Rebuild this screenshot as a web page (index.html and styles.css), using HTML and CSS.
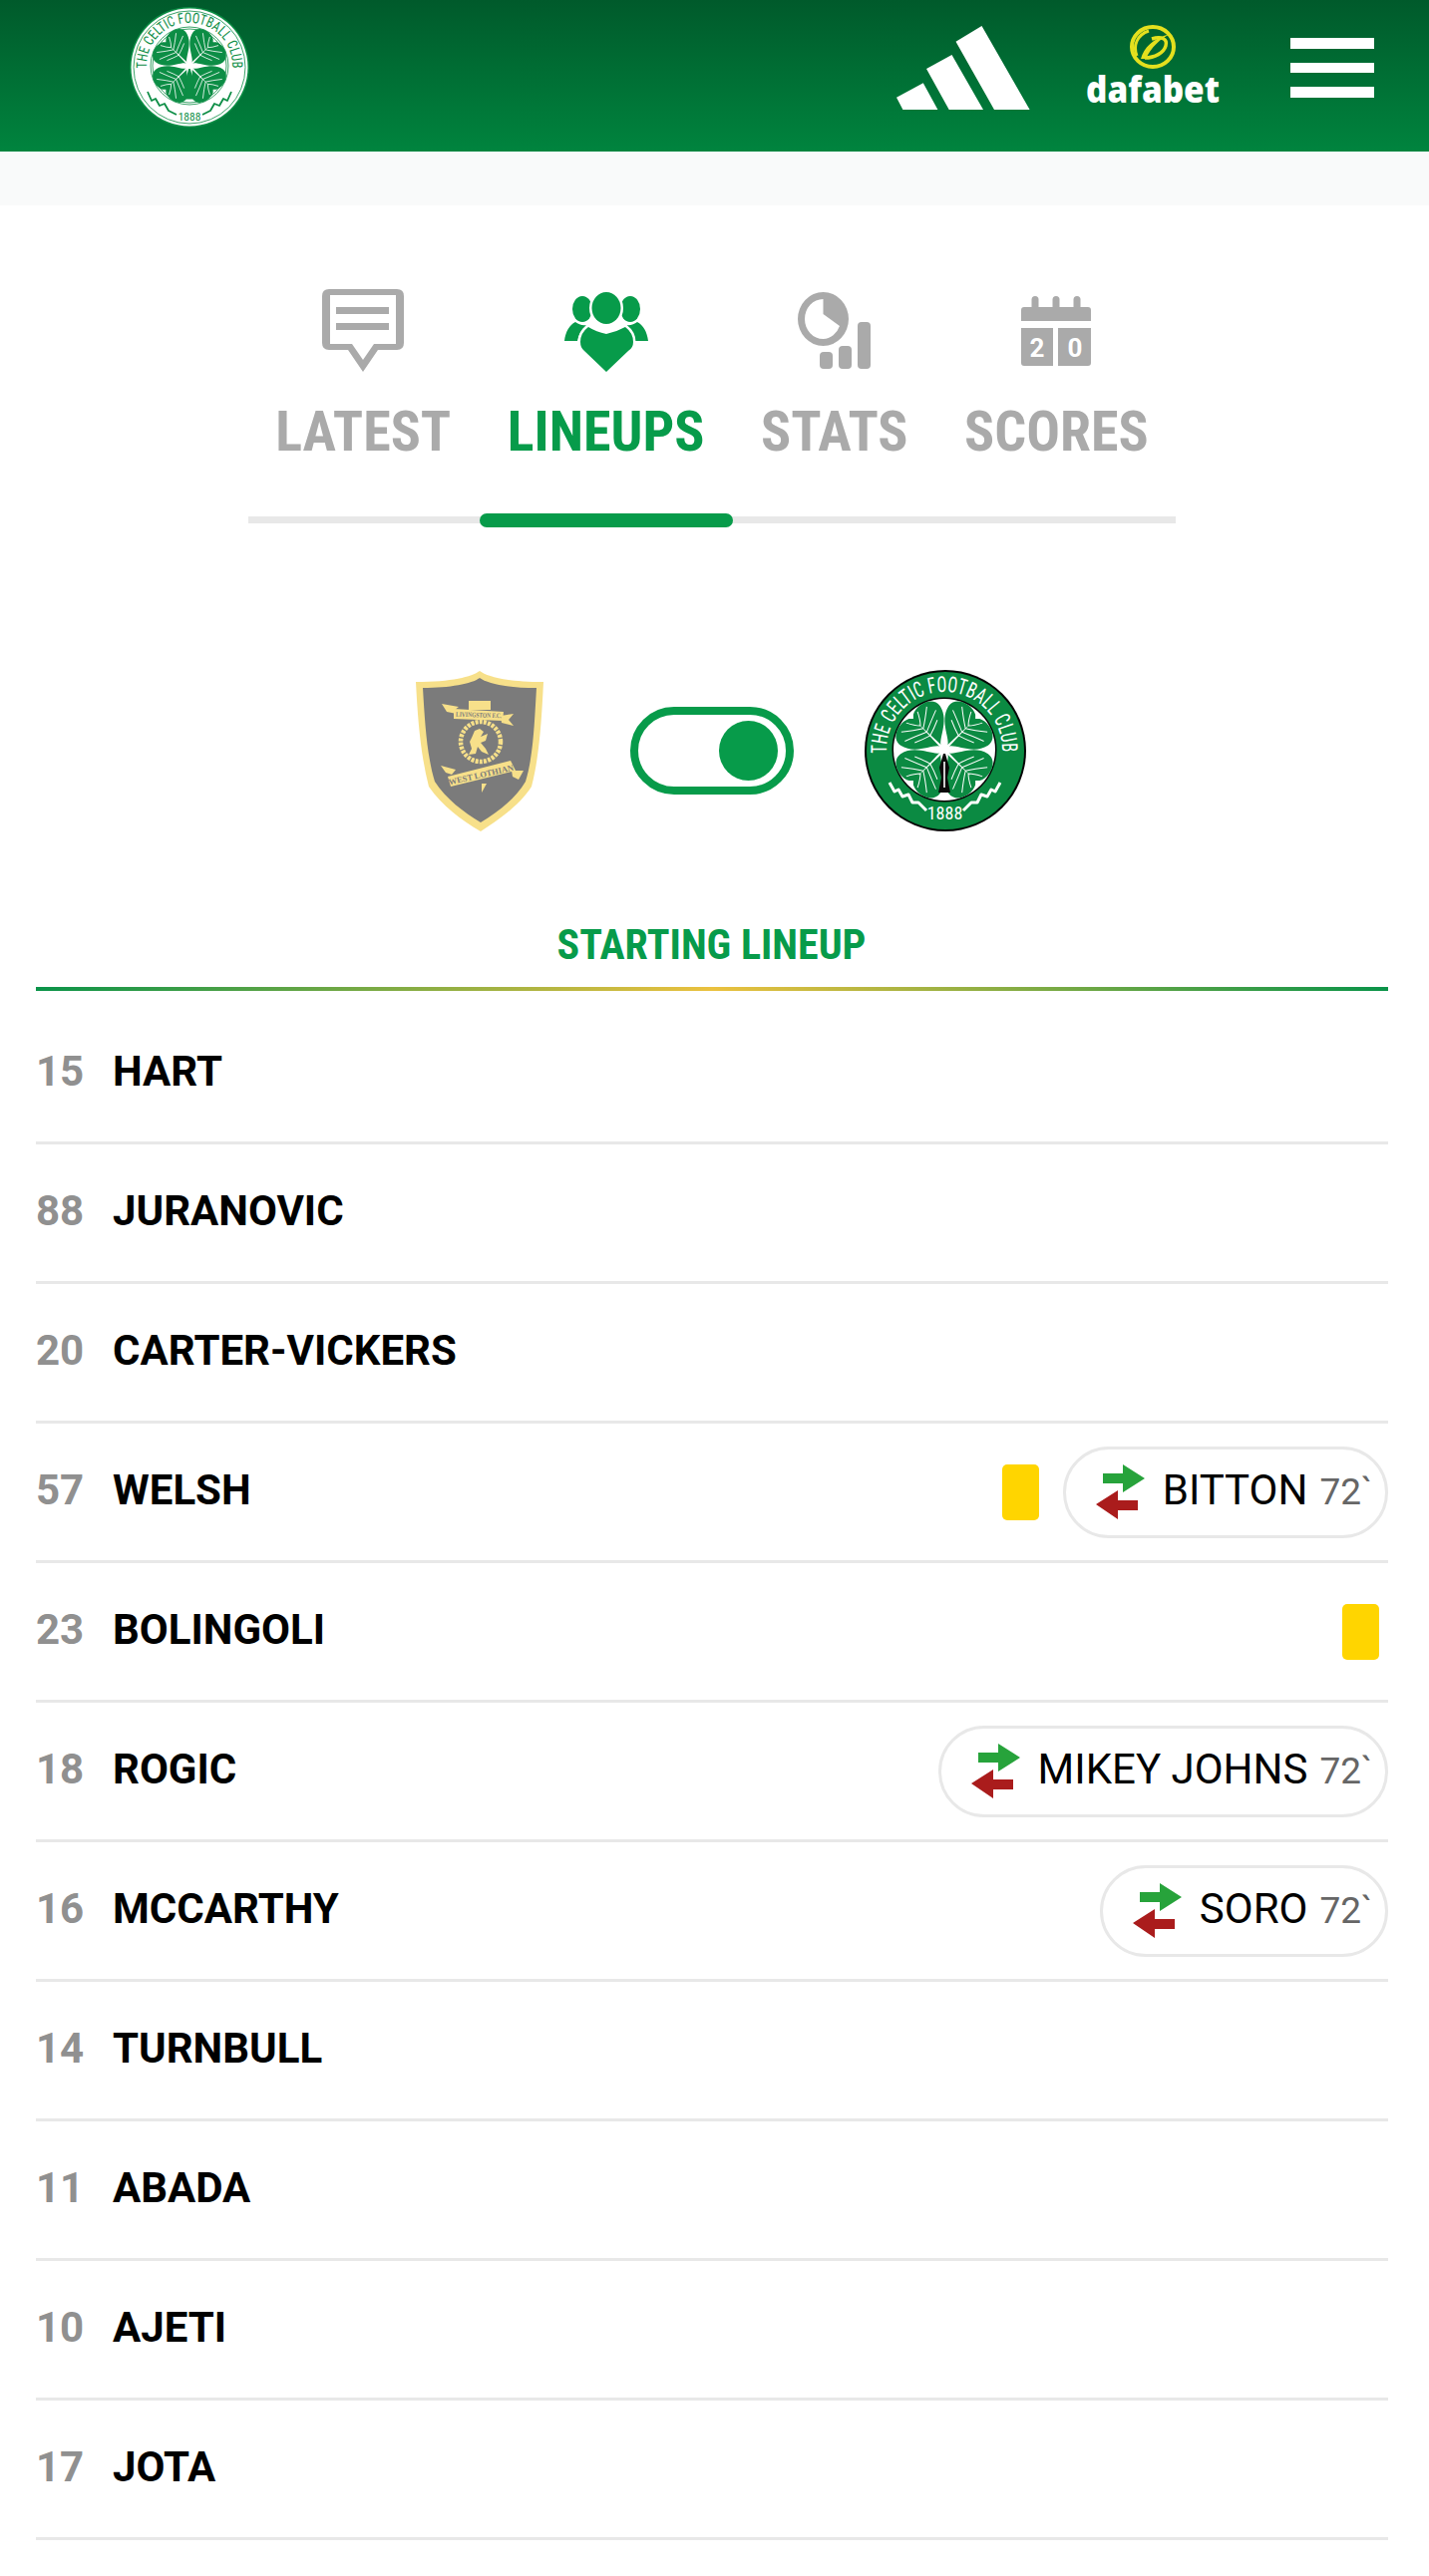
FILE: index.html
```html
<!DOCTYPE html>
<html lang="en">
<head>
<meta charset="utf-8">
<title>Lineups</title>
<link rel="stylesheet" href="styles.css">
</head>
<body>
<svg class="defs" aria-hidden="true">
  <defs>
    <symbol id="sub" viewBox="0 0 50 56">
      <path fill="#27a33b" d="M7 9H27V0L49 14 27 28V19H7Z"/>
      <path fill="#aa1c1c" d="M42 36H22V26L0 40 22 55V46H42Z"/>
    </symbol>
    <g id="leaf">
      <path d="M0-4C-2-12-24-16-28-34-30-47-12-52-3-47L0-44 3-47C12-52 30-47 28-34 24-16 2-12 0-4Z"/>
      <path class="midrib" d="M-1.300-3 0-38 1.300-3Z"/>
      <path class="veins" d="M0-20Q-7-22-16-26M0-25Q-9-29-22-34M0-30Q-8-35-18-43M0-34Q-4-38-8-46M0-20Q7-22 16-26M0-25Q9-29 22-34M0-30Q8-35 18-43M0-34Q4-38 8-46"/>
    </g>
    <g id="clover">
      <use href="#leaf" transform="rotate(45)"/>
      <use href="#leaf" transform="rotate(135)"/>
      <use href="#leaf" transform="rotate(225)"/>
      <use href="#leaf" transform="rotate(315)"/>
    </g>
  </defs>
</svg>

<header class="topbar">
  <svg class="crest-small" viewBox="0 0 120 121">
    <ellipse cx="60" cy="60.500" rx="60" ry="60.500" fill="#0c8d45"/>
    <ellipse cx="60" cy="60.500" rx="58.500" ry="59" fill="#fff"/>
    <ellipse cx="60" cy="60.500" rx="56" ry="56.500" class="crest-line"/>
    <circle cx="60" cy="59" r="39" class="crest-line"/>
    <circle cx="60" cy="59" r="37" class="crest-line"/>
    <path id="arc-small" fill="none" d="M17.600 66A43 43 0 1 1 102.400 66"/>
    <text class="crest-ring crest-ring-small"><textPath href="#arc-small" textLength="140" startOffset="4.500" lengthAdjust="spacingAndGlyphs">THE CELTIC FOOTBALL CLUB</textPath></text>
    <g class="clover-small" transform="translate(60 59) scale(.76)">
      <use href="#clover"/>
      <path d="M-1 4-5 18-3 28-6 44H6L3 28 5 18 1 4Z"/>
    </g>
    <path class="wave wave-small" d="M18 85 22 94 26 92 30 99 35 97 39 104 47 108M102 85 98 94 94 92 90 99 85 97 81 104 73 108"/>
    <text class="crest-year crest-year-small" x="60" y="114">1888</text>
  </svg>

  <svg class="adidas" viewBox="0 0 134 84" role="img" aria-label="adidas">
    <path fill="#fff" d="M0 71.700 26.800 57.300 41.400 84H6.400ZM30 43 55.500 29 87 84H52.700ZM59.500 15.700 85.500 0 133.600 84H98Z"/>
  </svg>

  <svg class="dafabet" viewBox="0 0 136 84">
    <ellipse cx="68" cy="21" rx="21" ry="20" fill="none" stroke="#e4e01e" stroke-width="4"/>
    <path class="dafabet-arc" d="M52 30C48 20 52 9 64 5"/>
    <path fill="#e4e01e" d="M56 33C59 22 68 12 86 8 76 12 66 22 61 33Z"/>
    <path class="dafabet-d" d="M67 13C77 10 83 13 81 20 79 27 70 32 60 32"/>
    <text class="dafabet-word" x="68" y="77" textLength="134" lengthAdjust="spacingAndGlyphs">dafabet</text>
  </svg>

  <div class="burger"><span></span><span></span><span></span></div>
</header>
<div class="subbar"></div>

<nav class="tabs">
  <a class="tab">
    <svg class="tab-icon tab-latest" viewBox="0 0 82 83">
      <path d="M7 0H75Q82 0 82 7V54Q82 61 75 61H56L41 83 26 61H7Q0 61 0 54V7Q0 0 7 0ZM8 6V55H30L41 71 52 55H74V6ZM14 18H67V25H14ZM14 34H67V41H14Z" fill-rule="evenodd"/>
    </svg>
    <span class="tab-label">LATEST</span>
  </a>
  <a class="tab tab-on">
    <svg class="tab-icon tab-lineups" viewBox="0 0 84 80">
      <ellipse cx="18" cy="17" rx="10" ry="13"/>
      <ellipse cx="66" cy="17" rx="10" ry="13"/>
      <path d="M11 30C14 32 18 34 22 33 17 38 14 43 13 49H0C1 40 5 33 11 30ZM73 30C70 32 66 34 62 33 67 38 70 43 71 49H84C83 40 79 33 73 30Z"/>
      <ellipse class="gap-stroke" cx="42" cy="16" rx="14.500" ry="16"/>
      <path class="gap-stroke" d="M24 35Q32 40 42 42 52 40 61 35 69 41 69 50 69 56 64 59L42 80 20 59Q16 56 16 50 16 41 24 35Z"/>
    </svg>
    <span class="tab-label">LINEUPS</span>
  </a>
  <a class="tab">
    <svg class="tab-icon tab-stats" viewBox="0 0 73 77">
      <path fill-rule="evenodd" d="M25.500 0A25.500 27 0 1 1 25.500 54 25.500 27 0 1 1 25.500 0ZM25.500 7A18.500 20 0 1 0 25.500 47 18.500 20 0 0 0 42 34L25.500 22Z"/>
      <rect x="22" y="60" width="13" height="17" rx="4"/>
      <rect x="41" y="54" width="13" height="23" rx="4"/>
      <rect x="60" y="30" width="13" height="47" rx="4"/>
    </svg>
    <span class="tab-label">STATS</span>
  </a>
  <a class="tab">
    <svg class="tab-icon tab-scores" viewBox="0 0 70 70">
      <rect x="10.500" y="0" width="7" height="16" rx="3.500"/>
      <rect x="31.500" y="0" width="7" height="16" rx="3.500"/>
      <rect x="52.500" y="0" width="7" height="16" rx="3.500"/>
      <path d="M3 11H67Q70 11 70 14V25H0V14Q0 11 3 11ZM0 32H32V70H3Q0 70 0 67ZM37 32H70V67Q70 70 67 70H37Z"/>
      <text class="score-digit" x="16" y="61">2</text>
      <text class="score-digit" x="54" y="61">0</text>
    </svg>
    <span class="tab-label">SCORES</span>
  </a>
</nav>
<div class="rail"><span class="rail-on"></span></div>

<section class="teams">
  <svg class="shield" viewBox="0 0 128 161">
    <path fill="#f7e08a" d="M64 0C72 6 92 11 128 11 126 50 124 85 116 116 104 135 82 150 65 161 46 150 26 135 13 116 5 85 2 50 0 11 36 11 56 6 64 0Z"/>
    <path fill="#7b7b7b" d="M64 7C72 13 94 17 121 17 119 50 118 85 110 111 100 128 82 142 65 152 48 142 30 128 19 111 11 85 9 50 7 17 34 17 56 13 64 7Z"/>
    <g fill="#f7e08a">
      <path d="M26 33 43 36 39 39 41 43 31 41ZM85 45 98 43 93 49 98 55 86 52Z"/>
      <path d="M38 38 88 41 87 50 38 48Z"/>
      <path d="M53 30H75V39H53Z"/>
      <path d="M56 67 59 60 64 58 68 61 65 66 72 63 70 70 65 72 70 78 73 84 66 81 62 76 60 83 53 84 56 78 54 71Z"/>
      <path d="M32 106 95 90 100 100 35 116Z"/>
      <path d="M25 95 40 99 36 104 30 102ZM96 100 108 100 103 109 97 106Z"/>
      <path d="M66 113H71L66 122 66 118Z"/>
    </g>
    <circle class="wreath" cx="65" cy="71" r="20"/>
    <text class="shield-top" transform="translate(63 46.500) rotate(2)" textLength="46" lengthAdjust="spacingAndGlyphs">LIVINGSTON F.C.</text>
    <text class="shield-ribbon" transform="translate(66 107) rotate(-13)">WEST LOTHIAN</text>
  </svg>

  <div class="toggle"><span class="toggle-knob"></span></div>

  <svg class="crest-big" viewBox="0 0 162 162">
    <circle cx="81" cy="81" r="81" fill="#050505"/>
    <circle cx="81" cy="81" r="79" fill="#0b8a42"/>
    <circle cx="80" cy="80" r="52.500" fill="#050505"/>
    <circle cx="80" cy="80" r="51" fill="#fff"/>
    <path id="arc-big" fill="none" d="M23 90.700A58 58 0 1 1 137 90.700"/>
    <text class="crest-ring crest-ring-big"><textPath href="#arc-big" textLength="188" startOffset="7" lengthAdjust="spacingAndGlyphs">THE CELTIC FOOTBALL CLUB</textPath></text>
    <g class="clover-big" transform="translate(80 80)">
      <use href="#clover"/>
      <path fill="#0a0a0a" d="M-1 4-5 18-3 28-6 43H6L3 28 5 18 1 4Z"/>
      <path d="M-.8 12V38H.8V12Z" fill="#fff"/>
    </g>
    <path class="wave wave-big" d="M25 113 30 122 34 120 38 127 44 125 48 133 54 133 62 141M136 113 131 122 127 120 123 127 117 125 113 133 107 133 99 141"/>
    <text class="crest-year crest-year-big" x="80.500" y="150">1888</text>
  </svg>
</section>

<h2 class="lineup-title">STARTING LINEUP</h2>
<div class="lineup-rule"></div>

<ul class="players">
  <li class="player"><span class="num">15</span><span class="name">HART</span></li>
  <li class="player"><span class="num">88</span><span class="name">JURANOVIC</span></li>
  <li class="player"><span class="num">20</span><span class="name">CARTER-VICKERS</span></li>
  <li class="player">
    <span class="num">57</span><span class="name">WELSH</span>
    <span class="events">
      <span class="card"></span>
      <span class="sub"><svg class="sub-icon"><use href="#sub"/></svg><span class="sub-name">BITTON</span><span class="sub-min">72`</span></span>
    </span>
  </li>
  <li class="player">
    <span class="num">23</span><span class="name">BOLINGOLI</span>
    <span class="events events-card"><span class="card"></span></span>
  </li>
  <li class="player">
    <span class="num">18</span><span class="name">ROGIC</span>
    <span class="events">
      <span class="sub"><svg class="sub-icon"><use href="#sub"/></svg><span class="sub-name">MIKEY JOHNS</span><span class="sub-min">72`</span></span>
    </span>
  </li>
  <li class="player">
    <span class="num">16</span><span class="name">MCCARTHY</span>
    <span class="events">
      <span class="sub"><svg class="sub-icon"><use href="#sub"/></svg><span class="sub-name">SORO</span><span class="sub-min">72`</span></span>
    </span>
  </li>
  <li class="player"><span class="num">14</span><span class="name">TURNBULL</span></li>
  <li class="player"><span class="num">11</span><span class="name">ABADA</span></li>
  <li class="player"><span class="num">10</span><span class="name">AJETI</span></li>
  <li class="player"><span class="num">17</span><span class="name">JOTA</span></li>
</ul>
</body>
</html>
```

FILE: styles.css
```css
* { box-sizing: border-box; }
html, body { margin: 0; padding: 0; background: #fff; }
body { font-family: Roboto, "Liberation Sans", sans-serif; color: #000; }
.defs { position: absolute; width: 0; height: 0; overflow: hidden; }

.topbar {
  height: 152px;
  background: linear-gradient(180deg, #005a2b 0%, #00843e 100%);
  display: flex;
  align-items: flex-start;
  padding-left: 130px;
}
.crest-small { width: 120px; height: 121px; margin-top: 7px; }
.adidas { width: 134px; height: 84px; margin-top: 26px; margin-left: 649px; }
.dafabet { width: 136px; height: 84px; margin-top: 26px; margin-left: 55px; overflow: visible; }
.burger { width: 84px; margin-top: 38px; margin-left: 70px; display: flex; flex-direction: column; gap: 14px; }
.burger span { display: block; height: 10.500px; background: #fff; }
.dafabet-word { font-family: "Open Sans", sans-serif; font-weight: 800; font-size: 37px; fill: #fff; text-anchor: middle; }
.dafabet-arc { fill: none; stroke: #e4e01e; stroke-width: 3; }
.dafabet-d { fill: none; stroke: #e4e01e; stroke-width: 3.500; }

.subbar { height: 54px; background: #f9fafa; }

.tabs { display: flex; justify-content: center; gap: 56.500px; padding-top: 84px; padding-right: 5px; }
.tab { display: flex; flex-direction: column; align-items: center; color: #aaaaaa; fill: #aaaaaa; }
.tab-on { color: #079b4a; fill: #079b4a; }
.tab-icon { display: block; margin-bottom: 30px; }
.tab-latest { width: 82px; height: 83px; }
.tab-lineups { width: 84px; height: 80px; margin-top: 3px; }
.tab-stats { width: 73px; height: 77px; margin-top: 3px; margin-bottom: 33px; }
.tab-scores { width: 70px; height: 70px; margin-top: 7px; margin-bottom: 36px; }
.tab-label { font-family: "Roboto Condensed", "Liberation Sans Narrow", "Liberation Sans", sans-serif; font-weight: 700; font-size: 56px; line-height: 60px; }
.gap-stroke { stroke: #fff; stroke-width: 5px; paint-order: stroke; }
.score-digit { font-family: Roboto, sans-serif; font-weight: 700; font-size: 26px; fill: #fff; text-anchor: middle; }

.rail { position: relative; width: 930px; height: 7px; margin: 55px 0 0 249px; background: #e8e8e8; }
.rail-on { position: absolute; left: 232px; top: -3px; width: 254px; height: 14px; border-radius: 7px; background: #079b4a; }

.teams { display: flex; align-items: center; margin-top: 147px; padding-left: 417px; }
.shield { width: 128px; height: 161px; }
.wreath { fill: none; stroke: #f7e08a; stroke-width: 4.500; stroke-dasharray: 3 1.200; }
.toggle { width: 164px; height: 88px; margin-left: 87px; border: 8.500px solid #079b4a; border-radius: 44px; background: #fff; display: flex; align-items: center; justify-content: flex-end; padding-right: 8px; }
.toggle-knob { width: 59px; height: 60px; border-radius: 50%; background: #079b4a; }
.crest-big { width: 162px; height: 162px; margin-left: 71px; }

.crest-ring { font-family: "Roboto Condensed", "Liberation Sans Narrow", sans-serif; }
.crest-ring-small { font-size: 14.500px; fill: #0c8d45; }
.crest-ring-big { font-size: 22px; fill: #fff; }
.crest-line { fill: none; stroke: #0c8d45; stroke-width: .8px; }
.clover-small { fill: #0c8d45; }
.clover-big { fill: #0b8a42; }
.midrib { fill: #fff; }
.veins { fill: none; stroke: #fff; stroke-width: 1; }
.wave { fill: none; stroke-linejoin: round; }
.wave-small { stroke: #0c8d45; stroke-width: 1.800; }
.wave-big { stroke: #fff; stroke-width: 3; }
.crest-year { font-family: "Roboto Condensed", "Liberation Sans Narrow", sans-serif; text-anchor: middle; }
.crest-year-small { font-size: 11.500px; fill: #0c8d45; }
.crest-year-big { font-size: 18px; fill: #fff; }
.shield-top { font-family: "Liberation Serif", serif; font-size: 7px; font-weight: 700; fill: #7b7b7b; text-anchor: middle; }
.shield-ribbon { font-family: "Liberation Serif", serif; font-size: 8.500px; font-weight: 700; fill: #7b7b7b; text-anchor: middle; }

.lineup-title { margin: 92px 0 0; text-align: center; font-family: "Roboto Condensed", "Liberation Sans Narrow", "Liberation Sans", sans-serif; font-weight: 700; font-size: 42px; line-height: 44px; color: #079b4a; padding-right: 6px; }
.lineup-rule { height: 4px; margin: 20px 41px 0 36px; background: linear-gradient(90deg, #0a9349 0%, #ebc13f 50%, #0a9349 100%); }

.players { list-style: none; margin: 14px 41px 0 36px; padding: 0; }
.player { height: 140px; display: flex; align-items: center; border-bottom: 3px solid #e8e8e8; font-size: 42px; line-height: 50px; }
.num { width: 77px; font-weight: 700; color: #909090; padding-bottom: 3px; }
.name { font-weight: 700; padding-bottom: 3px; }
.events { margin-left: auto; display: flex; align-items: center; gap: 24px; }
.events-card { padding-right: 9px; }
.card { display: block; width: 37px; height: 56px; border-radius: 5px; background: #ffd500; }
.sub { display: flex; align-items: center; height: 92px; padding: 0 12.500px 0 30px; border: 3px solid #e8e8e8; border-radius: 46px; }
.sub-icon { width: 50px; height: 56px; margin-right: 17px; }
.sub-name { font-weight: 400; padding-bottom: 3px; }
.sub-min { margin-left: 12px; font-size: 37px; color: #666; }
```
